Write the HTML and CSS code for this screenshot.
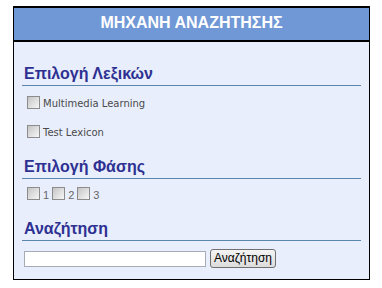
FILE: index.html
```html
<!DOCTYPE html>
<html>
<head>
<meta charset="utf-8">
<link rel="stylesheet" href="styles.css">
</head>
<body>
<div class="page">
  <div class="box">
    <div class="header">ΜΗΧΑΝΗ ΑΝΑΖΗΤΗΣΗΣ</div>
    <div class="content">
      <h2 class="title first">Επιλογή Λεξικών</h2>
      <div class="row r1"><input type="checkbox" class="cb"><span class="lbl">Multimedia Learning</span></div>
      <div class="row r2"><input type="checkbox" class="cb"><span class="lbl">Test Lexicon</span></div>
      <h2 class="title">Επιλογή Φάσης</h2>
      <div class="row phase">
        <input type="checkbox" class="cb"><span class="num">1</span>
        <input type="checkbox" class="cb"><span class="num">2</span>
        <input type="checkbox" class="cb"><span class="num">3</span>
      </div>
      <h2 class="title">Αναζήτηση</h2>
      <div class="search">
        <input type="text" class="field">
        <button class="btn">Αναζήτηση</button>
      </div>
    </div>
  </div>
</div>
</body>
</html>
```
FILE: styles.css
```css
html, body {
  margin: 0;
  padding: 0;
  background: #ffffff;
}
.page {
  padding: 6px 0 0 13px;
}
.box {
  width: 355px;
  height: 271px;
  border: 1px solid #000;
  border-top: 2px solid #000;
  background: #e8eefb;
  display: flex;
  flex-direction: column;
}
.header {
  height: 30px;
  padding-bottom: 2px;
  line-height: 30px;
  background: #7198d6;
  border-bottom: 2px solid #000;
  color: #fff;
  font-family: "Liberation Sans", Arial, sans-serif;
  font-weight: bold;
  font-size: 16px;
  text-align: center;
}
.content {
  padding: 0 8px 0 8px;
}
.title {
  margin: 19px 0 0 0;
  padding: 0 0 2px 2px;
  font-family: "Liberation Sans", Arial, sans-serif;
  font-size: 16px;
  font-weight: bold;
  line-height: 19px;
  color: #2e3192;
  border-bottom: 1px solid #5b86ae;
}
.title.first {
  margin-top: 22px;
}
.row {
  display: flex;
  align-items: flex-start;
  height: 13px;
  padding-left: 5px;
  margin-top: 8px;
}
.row.r1 { margin-top: 10px; }
.row.r2 { margin-top: 16px; }
.cb {
  appearance: none;
  -webkit-appearance: none;
  width: 13px;
  height: 13px;
  margin: 0;
  box-sizing: border-box;
  border: 1px solid #8c8c8c;
  background: linear-gradient(135deg, #c4c4c4 0%, #dedede 50%, #f6f6f6 100%);
  flex: none;
}
.lbl {
  margin-left: 3px;
  padding-top: 1px;
  font-family: "DejaVu Sans", Tahoma, sans-serif;
  font-size: 10px;
  line-height: 13px;
  color: #4a4a4a;
}
.num {
  margin: 0 3px 0 3px;
  padding-top: 2px;
  font-family: "Liberation Sans", Arial, sans-serif;
  font-size: 11px;
  line-height: 13px;
  color: #666;
}
.search {
  display: flex;
  align-items: center;
  margin-top: 8px;
  padding-left: 2px;
}
.field {
  width: 182px;
  height: 16px;
  box-sizing: border-box;
  margin: 0;
  padding: 0 2px;
  border: 1px solid #a5acb5;
  background: #fff;
}
.btn {
  margin: 0 0 0 4px;
  width: 66px;
  height: 19px;
  box-sizing: border-box;
  padding: 0;
  border: 1px solid #707070;
  border-radius: 3px;
  background: linear-gradient(#f4f4f4, #dcdcdc);
  font-family: "Liberation Sans", Arial, sans-serif;
  font-size: 12px;
  color: #000;
  line-height: 17px;
}
```
